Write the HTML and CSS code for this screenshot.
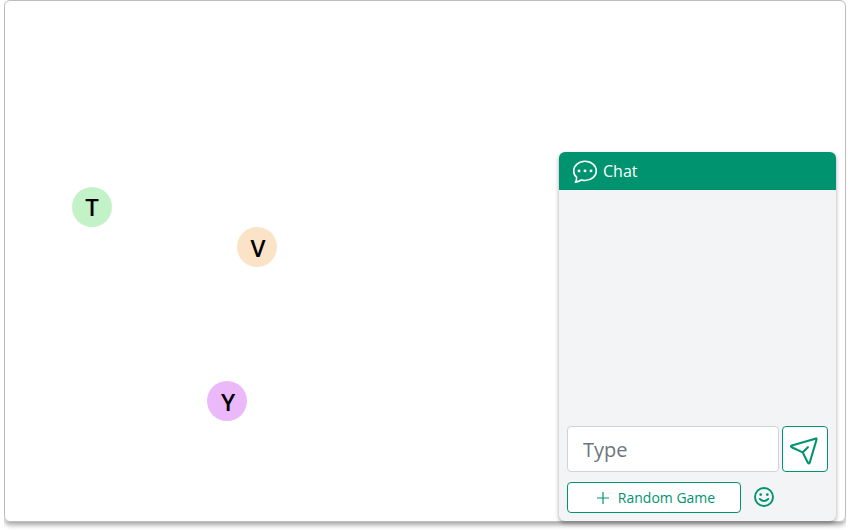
FILE: index.html
```html
<!DOCTYPE html>
<html lang="en">
<head>
<meta charset="utf-8">
<title>Game room</title>
<link rel="stylesheet" href="styles.css">
</head>
<body>
<main class="board">
  <div class="player player-t">T</div>
  <div class="player player-v">V</div>
  <div class="player player-y">Y</div>
  <section class="chat">
    <header class="chat-header">
      <svg class="chat-icon" width="26" height="26" viewBox="0 0 26 26" fill="none" stroke="currentColor" stroke-width="1.600" stroke-linejoin="round">
        <path d="M3.300 24.100c1-1.400 1.500-3.100 1.300-5C2.700 17.500 1.700 15.300 1.700 12.900C1.700 7.500 6.700 3.200 13 3.200s11.300 4.300 11.300 9.700S19.300 22.500 13 22.500c-1.300 0-2.500-.2-3.700-.5-1.800 1.200-3.800 1.900-6 2.100z"/>
        <g fill="currentColor" stroke="none"><circle cx="7" cy="12.900" r="1.450"/><circle cx="13" cy="12.900" r="1.450"/><circle cx="19" cy="12.900" r="1.450"/></g>
      </svg>
      <span>Chat</span>
    </header>
    <div class="messages"></div>
    <form class="composer">
      <div class="row">
        <input class="field" type="text" placeholder="Type">
        <button class="send" type="button" aria-label="Send">
          <svg width="32" height="32" viewBox="0.8 -0.2 32 32" fill="none" stroke="currentColor" stroke-width="2.100" stroke-linejoin="round" stroke-linecap="round">
            <path d="M28 5.200L3.600 12.200Q2 13 3.500 14L14.500 19.200L19.700 29.500Q20.700 31 21.500 29.500L28.300 6.500Q28.500 5 27.500 5.300M14.500 19.200L19.700 14"/>
          </svg>
        </button>
      </div>
      <div class="row actions">
        <button class="random" type="button">
          <svg width="12" height="12" viewBox="0 0 12 12" stroke="currentColor" stroke-width="1.200"><path d="M6 0v12M0 6h12"/></svg>
          <span>Random Game</span>
        </button>
        <svg class="smile" width="20" height="20" viewBox="0 0 20 20" fill="none" stroke="currentColor" stroke-width="1.900" stroke-linecap="round">
          <circle cx="10" cy="10" r="9"/><path d="M5.800 12q4.200 3.800 8.400 0"/>
          <g fill="currentColor" stroke="none"><circle cx="6.700" cy="7.600" r="1.350"/><circle cx="13.300" cy="7.600" r="1.350"/></g>
        </svg>
      </div>
    </form>
  </section>
</main>
</body>
</html>
```
FILE: styles.css
```css
* { box-sizing: border-box; }

body {
  margin: 0 4px;
  height: 530px;
  overflow: hidden;
  background: #fff;
  font-family: "Open Sans", "Noto Sans", sans-serif;
}

.board {
  position: relative;
  display: flex;
  justify-content: flex-end;
  align-items: flex-end;
  height: 522px;
  padding-right: 9px;
  border: 1px solid #bdbdbd;
  border-radius: 6px;
  box-shadow: 0 3px 5px rgba(0, 0, 0, .35);
}

.player {
  position: absolute;
  display: flex;
  align-items: center;
  justify-content: center;
  width: 40px;
  height: 40px;
  border-radius: 50%;
  color: #000;
  font-size: 24px;
  font-weight: 600;
  line-height: 40px;
}
.player-t { left: 67px; top: 186px; background: #c4f2c8; }
.player-v { left: 232px; top: 226px; padding: 2px 0 0 2px; background: #fae3c6; }
.player-y { left: 202px; top: 380px; padding: 2px 0 0 2px; background: #ebb9f9; }

.chat {
  display: flex;
  flex-direction: column;
  width: 277px;
  height: 369px;
  border-radius: 6px;
  background: #f3f4f6;
  box-shadow: 0 2px 4px rgba(0, 0, 0, .35);
  overflow: hidden;
}

.chat-header {
  display: flex;
  align-items: center;
  gap: 5px;
  height: 38px;
  padding-left: 13px;
  background: #00936f;
  color: #fff;
  font-size: 16px;
}

.messages { flex: 1; }

.composer { padding: 0 8px 8px; }
.row { display: flex; gap: 3px; }

.field {
  width: 212px;
  height: 46px;
  padding: 0 15px;
  border: 1px solid #ced4da;
  border-radius: 4px;
  background: #fff;
  font: 20px "Open Sans", sans-serif;
}
.field::placeholder { color: #6c757d; opacity: 1; }

.send, .random {
  display: flex;
  align-items: center;
  justify-content: center;
  padding: 0;
  border: 1px solid #00936f;
  border-radius: 4px;
  background: #fff;
  color: #00936f;
}
.send { width: 46px; height: 46px; }

.actions {
  align-items: center;
  gap: 13px;
  margin-top: 10px;
}
.random {
  gap: 9px;
  width: 174px;
  height: 31px;
  padding-left: 4px;
  font: 14px "Open Sans", sans-serif;
}
.smile { margin-bottom: 2px; color: #00936f; }
```
